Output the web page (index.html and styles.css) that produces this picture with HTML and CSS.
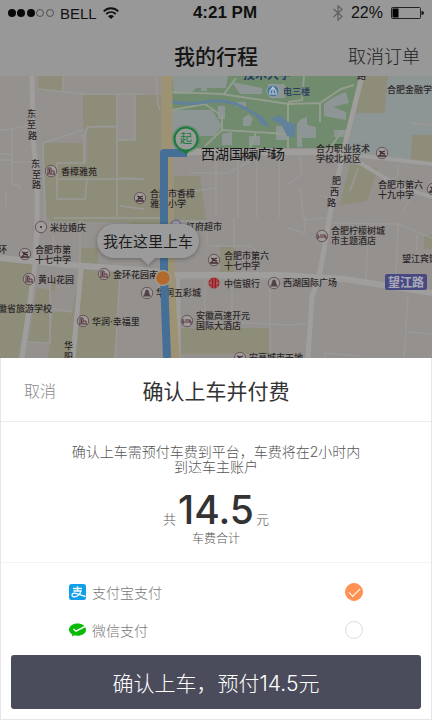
FILE: index.html
```html
<!DOCTYPE html>
<html lang="zh-CN">
<head>
    <meta charset="UTF-8">
    <meta name="viewport" content="width=device-width, initial-scale=1.0">
    <title>我的行程</title>
    <link rel="stylesheet" href="styles.css">
</head>
<body>
    <div class="status-bar">
        <div class="status-left">
            <svg class="signal" width="46" height="8" viewBox="0 0 46 8">
                <g fill="#080808">
                    <circle cx="4" cy="4" r="4"/><circle cx="13" cy="4" r="4"/><circle cx="23" cy="4" r="4"/>
                </g>
                <g fill="none" stroke="#333" stroke-width=".7">
                    <circle cx="32" cy="4" r="3.5"/><circle cx="42" cy="4" r="3.5"/>
                </g>
            </svg>
            <span class="carrier">BELL</span>
            <svg width="16" height="12" viewBox="0 0 16 12" fill="none" stroke="#111" stroke-width="1.8">
                <path d="M.7 4.3C4.8.2 11.2.2 15.3 4.3M3.2 7C6 4.4 10 4.4 12.8 7"/>
                <path d="M8 12L5 9.2Q8 6.8 11 9.2z" fill="#111" stroke="none"/>
            </svg>
        </div>
        <div class="clock">4:21 PM</div>
        <div class="status-right">
            <svg width="10" height="16" viewBox="0 0 10 16" fill="none" stroke="#606060" stroke-width="1.2">
                <path d="M.5 4l8.500 7.500L5 15.200V.8l4 3.700L.5 12"/>
            </svg>
            <span class="percent">22%</span>
            <svg width="33" height="12" viewBox="0 0 33 12">
                <rect x=".5" y=".5" width="29" height="11" rx="1" fill="none" stroke="#222"/>
                <rect x="1.500" y="1.500" width="6" height="9" fill="#050505"/>
                <path d="M30.500 4q2.500 0 2.500 2t-2.500 2z" fill="#111"/>
            </svg>
        </div>
    </div>

    <header class="nav-bar">
        <h1>我的行程</h1>
        <a href="#" class="cancel-order">取消订单</a>
    </header>

    <main class="map">
        <svg class="map-canvas" viewBox="0 0 432 282" preserveAspectRatio="xMidYMid slice">
            <defs>
                <g id="poi" fill="#a09c9b" stroke="#59464b" stroke-width=".8"><circle r="5.700"/></g>
                <g id="building"><use href="#poi"/><path d="M-3 3V-3H0V3M0 0H3V3M-4 3H4M-1.500-2V2" fill="none" stroke="#593840" stroke-width="1"/></g>
                <g id="school"><use href="#poi"/><path d="M-3-2L0-1 3-2M-2 0L3 1M-4 3H4M-2 1V3" fill="none" stroke="#402b30" stroke-width="1.300"/></g>
                <g id="hotel"><use href="#poi"/><path d="M-4-2V3M-4 1H4V3M-2-1H3V1" fill="none" stroke="#593840" stroke-width="1.200"/></g>
                <g id="mall"><use href="#poi"/><path d="M-3 3L-1-3H1L3 3zM-4 3H4" fill="#514147" stroke="#514147" stroke-width=".5"/></g>
            </defs>

            <rect width="432" height="282" fill="#94918f"/>

            <!-- blocks -->
            <g fill="#8e8d79">
                <path d="M38 0H63V15H42L38 11zM83 19H117V50H88L83 54zM43 67H84V87H87V52H117V103H138V144H47zM118 64H135V101H118zM135 19H161V144H118V103H135z"/>
                <path d="M0 185L34 189 26 240 18 282H0zM37 212L55 215V204L50 203V267H28zM80 193L120 197 115 282H48L53 236H72z"/>
                <path d="M47 142H161V147L50 145zM130 140H161V153H130zM81 172H98V192H81zM174 100H200L206 145H174zM220 170H234V196H220zM174 252H269V278H174z"/>
                <path d="M362 0H388L385 37H356zM412 59H432V87H410zM350 88L378 92 367 125 340 129zM424 159H432V173H424z"/>
            </g>
            <path d="M388 0H432V59H412L410 86 346 78 356 37H385z" fill="#8e9695"/>

            <!-- park -->
            <path d="M172 0H359L343 72H172z" fill="#718b6e"/>
            <g fill="#8e9695">
                <path d="M172 0H228L226 12H196L190 18H174zM172 34L212 34 222 50 214 60H200L196 72H172zM201 0H207V15H201zM218 30H225V43H218zM232 6L262 12V18H240z"/>
                <path d="M243 42L249 38 253 43 250 50H243zM222 58L232 56V69H222zM249 60H260V69H249zM268 8H285V22H270zM301 43L307 41V49L316 51V62H302V71H297V48zM324 28L332 22 346 16 349 27 333 31 346 36V44L324 40zM334 54H346V61H334z"/>
                <path d="M236 26H246V31H236zM276 50H287V64H276z"/>
            </g>
            <g fill="none" stroke="#939d8e" stroke-width="2">
                <path d="M172 16L222 18 288 28 320 27 341 13 354 9M224 18L236 2M288 28V72M172 34L205 28 222 40V54L205 70M222 54L288 58M288 26L302 24 304 0M256 56L250 72M320 27V46M330 72L343 54"/>
            </g>
            <path d="M172 26Q190 29 205 26T236 28Q256 36 268 50" fill="none" stroke="#61829a" stroke-width="3"/>
            <path d="M254 36L262 40 267 46V51L260 47zM270 43L280 39 288 46 296 49 294 62 287 60 281 48z" fill="#61829a"/>

            <!-- minor roads -->
            <g fill="none" stroke="#9b9997" stroke-width="1.500">
                <path d="M38 13L65 16 83 18H144M63 0V16M83 54L43 67 45 144M117 19V50L88 51 84 60V87H57V103H144M57 103V123H85L87 103M117 51V141M118 64H135V18M84 87V67M0 54L12 53 27 50M0 78H12M0 84H12M12 54V108L20 110V115M12 86H32M6 115V130"/>
                <path d="M156 0L158 28 160 34M216 78V140M238 78V142M257 78V142M279 78V142M190 97H228L257 82M172 118L216 112M206 144L208 170H250L264 180M172 145H206M234 142V172M300 78L302 98 288 108M300 112L304 144M320 120L330 122M398 88V99L388 109M358 92L350 115M410 122L402 138M411 47L432 49"/>
                <path d="M288 152L305 157V140M305 144L325 142M330 147L398 148 432 162M398 148L396 200M417 158V174M368 152L366 206M408 220L404 282M408 256L432 258M288 249L306 248M325 282V277L360 280M176 203H270V282M205 206V250M232 206V246L288 249M180 216V282M54 142L160 142M53 160L55 188M50 203V267L28 266M72 236L50 232M120 197L115 282M80 193V144M144 133L120 130"/>
            </g>
            <!-- main roads -->
            <g fill="none" stroke="#a09e9c" stroke-linejoin="round">
                <path d="M32 0L33 60 37 105 37 150 35 188 28 240 22 282" stroke-width="5"/>
                <path d="M0 182L70 189 144 194 180 199H280L345 203 432 217" stroke-width="6"/>
                <path d="M362 0L344 72 330 138 319 202 312 220 308 282M81 193L73 282M35 185L38 150" stroke-width="5"/>
                <path d="M176 76H345" stroke-width="6"/>
                <path d="M345 78L432 88M350 81L400 111 432 121" stroke-width="4"/>
                <path d="M178 202V282" stroke-width="4"/>
            </g>
            <path d="M167 0V78L169 200 174 282" fill="none" stroke="#9d9272" stroke-width="11"/>

            <!-- place icons -->
            <use href="#building" x="51" y="95"/>
            <use href="#building" x="29" y="203"/>
            <use href="#building" x="104" y="198"/>
            <use href="#building" x="83" y="245"/>
            <use href="#school" x="140" y="122"/>
            <use href="#school" x="382" y="77"/>
            <use href="#school" x="433" y="113"/>
            <use href="#school" x="25" y="178"/>
            <use href="#school" x="214" y="184"/>
            <use href="#school" x="240" y="282"/>
            <use href="#hotel" x="187" y="245"/>
            <use href="#hotel" x="322" y="160"/>
            <use href="#mall" x="147" y="217"/>
            <use href="#mall" x="274" y="207"/>
            <use href="#poi" x="41" y="151"/>
            <circle cx="41" cy="151" r="1" fill="#332c2e"/>
            <circle cx="176" cy="149" r="5" fill="#9895a2" stroke="#59558c"/>
            <circle cx="273" cy="15" r="6" fill="#48749c" stroke="#8ea3af"/>
            <path d="M270 18V15L273 11 276 15V18M273 12V18M269 18H277" fill="none" stroke="#c0c9ce" stroke-width="1.200"/>
            <circle cx="214" cy="207" r="5.500" fill="#a5161b"/>
            <path d="M208 207H212M216 207H220M211 203V212M214 201V213M217 203V212" stroke="#a08c8a" stroke-width=".8"/>

            <!-- place names -->
            <g class="place">
                <text x="27" y="41">东</text><text x="27" y="52">至</text><text x="28" y="63">路</text>
                <text x="31" y="91">东</text><text x="32" y="102">至</text><text x="32" y="112">路</text>
                <text x="61" y="99">香樟雅苑</text>
                <text x="150" y="121">合肥市香樟</text>
                <text x="150" y="131">雅苑小学</text>
                <text x="387" y="17">合肥金融学院</text>
                <text x="316" y="76">合力职业技术</text>
                <text x="316" y="86">学校北校区</text>
                <text x="357" y="3">路</text>
                <text x="332" y="108">肥</text><text x="330" y="119">西</text><text x="327" y="130">路</text>
                <text x="378" y="112">合肥市第六</text>
                <text x="378" y="122">十九中学</text>
                <text x="50" y="155">米拉婚庆</text>
                <text x="-2" y="177">环</text>
                <text x="35" y="177">合肥市第</text>
                <text x="35" y="187">十七中学</text>
                <text x="38" y="207">黄山花园</text>
                <text x="113" y="202">金环花园南</text>
                <text x="-11" y="236">安徽省旅游学校</text>
                <text x="92" y="249">华润·幸福里</text>
                <text x="64" y="273">华</text><text x="64" y="284">阳</text>
                <text x="186" y="154">红府超市</text>
                <text x="224" y="183">合肥市第六</text>
                <text x="224" y="193">十七中学</text>
                <text x="224" y="211">中信银行</text>
                <text x="283" y="210">西湖国际广场</text>
                <text x="156" y="220">华润五彩城</text>
                <text x="196" y="243">安徽高速开元</text>
                <text x="196" y="253">国际大酒店</text>
                <text x="331" y="158">合肥柠檬树城</text>
                <text x="331" y="168">市主题酒店</text>
                <text x="402" y="186">望江宾馆</text>
                <text x="249" y="285">安高城市天地</text>
            </g>
            <text class="campus" x="243" y="3">技术大学</text>
            <text class="place blue" x="283" y="19">电三楼</text>
            <rect x="385" y="198" width="42" height="16" rx="2" fill="#484983"/>
            <text class="road-badge" x="388" y="211">望江路</text>

            <!-- route -->
            <path d="M187 77H164V202L167 282" fill="none" stroke="#456f96" stroke-width="8" stroke-linejoin="round"/>
            <circle cx="186" cy="63" r="14" fill="#1d7a3d" opacity=".3"/>
            <path d="M181 73L186 79 191 73z" fill="#1d7a3d"/>
            <circle cx="186" cy="63" r="11.500" fill="#989b98" stroke="#1d7a3d" stroke-width="2"/>
            <text class="start" x="180" y="67">起</text>
            <text class="place" x="240" y="82">大润广场</text>
            <text class="destination" x="201" y="83">西湖国际广场</text>
            <circle cx="163" cy="202" r="7.500" fill="#b26a2b" stroke="#9e9a94" stroke-width="1.500"/>

            <!-- pickup bubble -->
            <path class="bubble" d="M114 148H182A17 17 0 0 1 182 182H155L148 189 141 182H114A17 17 0 0 1 114 148z"/>
            <text class="pickup" x="148" y="171" text-anchor="middle">我在这里上车</text>
        </svg>
    </main>

    <section class="sheet">
        <div class="sheet-header">
            <button type="button" class="cancel">取消</button>
            <h2>确认上车并付费</h2>
        </div>

        <div class="fare">
            <p class="notice">确认上车需预付车费到平台，车费将在2小时内到达车主账户</p>
            <p class="price">共<strong>14.5</strong>元</p>
            <p class="caption">车费合计</p>
        </div>

        <form class="payment">
            <label class="method" for="alipay">
                <svg width="17" height="16" viewBox="0 0 17 16">
                    <rect width="17" height="16" rx="2.500" fill="#109fe9"/>
                    <path d="M4 4.500H13M8.500 2.300V7M4.500 7H12C11 10.500 8 13 5 12.800 2 12.500 2.500 9 5.500 9.200 8.500 9.500 11 11 16.500 12.500" fill="none" stroke="#fff" stroke-width="1.300"/>
                </svg>
                <span>支付宝支付</span>
                <input type="radio" id="alipay" name="method" checked>
            </label>
            <label class="method" for="wechat">
                <svg width="17" height="16" viewBox="0 0 17 16">
                    <path d="M8.500 1.500C13.200 1.500 17 4.200 17 7.700S13.200 13.700 8.500 13.700Q6.800 13.700 5.500 13.300L3 14.500 3.300 12.300C1.300 11.200 0 9.600 0 7.700 0 4.200 3.800 1.500 8.500 1.500z" fill="#09bb07"/>
                    <path d="M4.500 7L7 9.200 16 4.500" fill="none" stroke="#fff" stroke-width="1.500"/>
                </svg>
                <span>微信支付</span>
                <input type="radio" id="wechat" name="method">
            </label>
            <button type="submit" class="confirm">确认上车，预付14.5元</button>
        </form>
    </section>
</body>
</html>
```
FILE: styles.css
```css
* {
    box-sizing: border-box;
}
body {
    margin: 0;
    min-height: 100vh;
    display: flex;
    flex-direction: column;
    background: #989898;
    color: #333;
    font-family: Inter, "Noto Sans CJK SC", sans-serif;
}
h1, h2, p {
    margin: 0;
    font-weight: 400;
}
button {
    border: 0;
    padding: 0;
    background: none;
    font-family: inherit;
    font-weight: inherit;
}

/* Status bar */
.status-bar {
    display: grid;
    grid-template-columns: 1fr auto 1fr;
    align-items: center;
    height: 26px;
    padding: 0 8px;
    color: #111;
    font-family: "Liberation Sans", sans-serif;
}
.status-left,
.status-right {
    display: flex;
    align-items: center;
    gap: 6px;
}
.status-right {
    justify-content: flex-end;
    gap: 8px;
}
.carrier {
    font-size: 15px;
}
.clock {
    padding-left: 18px;
    font-size: 17px;
    font-weight: 700;
}
.percent {
    font-size: 16px;
}

/* Title */
.nav-bar {
    display: grid;
    grid-template-columns: 1fr auto 1fr;
    align-items: center;
    height: 50px;
    padding: 8px 12px 0;
}
.nav-bar h1 {
    grid-column: 2;
    color: #161616;
    font-size: 21px;
    font-weight: 500;
}
.cancel-order {
    justify-self: end;
    color: #222;
    font-size: 18px;
    font-weight: 300;
    text-decoration: none;
}

/* Map */
.map {
    flex: 1;
    min-height: 200px;
    display: flex;
    overflow: hidden;
}
.map-canvas {
    flex: 1;
    width: 100%;
    height: auto;
}
.place {
    fill: #2c2728;
    font-size: 9px;
    font-weight: 500;
}
.blue {
    fill: #253b61;
}
.campus {
    fill: #253b61;
    font-size: 12px;
    font-weight: 700;
}
.road-badge {
    fill: #aaaab8;
    font-size: 12px;
    font-weight: 700;
}
.start {
    fill: #1d7a3d;
    font-size: 12px;
}
.destination {
    fill: #161616;
    font-size: 14px;
}
.bubble {
    fill: #9b9b9b;
    filter: drop-shadow(0 1px 2px rgba(0, 0, 0, 0.3));
}
.pickup {
    fill: #1c1c1c;
    font-size: 15px;
}

/* Payment sheet */
.sheet {
    background: #fff;
    border: 1px solid #e6e6e6;
    border-top: 0;
    font-weight: 300;
}
.sheet-header {
    display: grid;
    grid-template-columns: 1fr auto 1fr;
    align-items: center;
    height: 64px;
    padding: 0 23px;
    border-bottom: 1px solid #ebebeb;
}
.cancel {
    justify-self: start;
    color: #888;
    font-size: 16px;
}
.sheet-header h2 {
    color: #333;
    font-size: 21px;
}
.fare {
    padding: 22px 64px 15px;
    border-bottom: 1px solid #f3f3f3;
    color: #555;
    text-align: center;
}
.fare p {
    font-weight: 300;
}
.notice {
    font-size: 14px;
    line-height: 15px;
}
.price {
    display: flex;
    justify-content: center;
    align-items: baseline;
    gap: 2px;
    margin-top: 18px;
    font-size: 13px;
    line-height: 16px;
}
.price strong {
    color: #333;
    font-size: 39px;
    font-weight: 500;
    line-height: 36px;
}
.caption {
    margin-top: 3px;
    font-size: 12px;
    line-height: 16px;
}
.payment {
    padding: 10px 10px 10px;
}
.method {
    display: flex;
    align-items: center;
    gap: 6px;
    height: 38px;
    padding: 0 58px;
    color: #777;
    font-size: 14px;
}
.method input {
    appearance: none;
    display: grid;
    place-items: center;
    width: 18px;
    height: 18px;
    margin: 0 0 0 auto;
    border: 1px solid #ddd;
    border-radius: 50%;
    background: #fff;
}
.method input:checked {
    border-color: #ff9152;
    background: #ff9152;
}
.method input:checked::after {
    content: "";
    width: 10px;
    height: 5px;
    margin-bottom: 3px;
    border: solid #fff;
    border-width: 0 0 1px 1px;
    transform: rotate(-45deg);
}
.confirm {
    display: block;
    width: 100%;
    height: 54px;
    margin-top: 6px;
    border-radius: 3px;
    background: #4b4c5b;
    color: #fff;
    font-size: 21px;
}
```
